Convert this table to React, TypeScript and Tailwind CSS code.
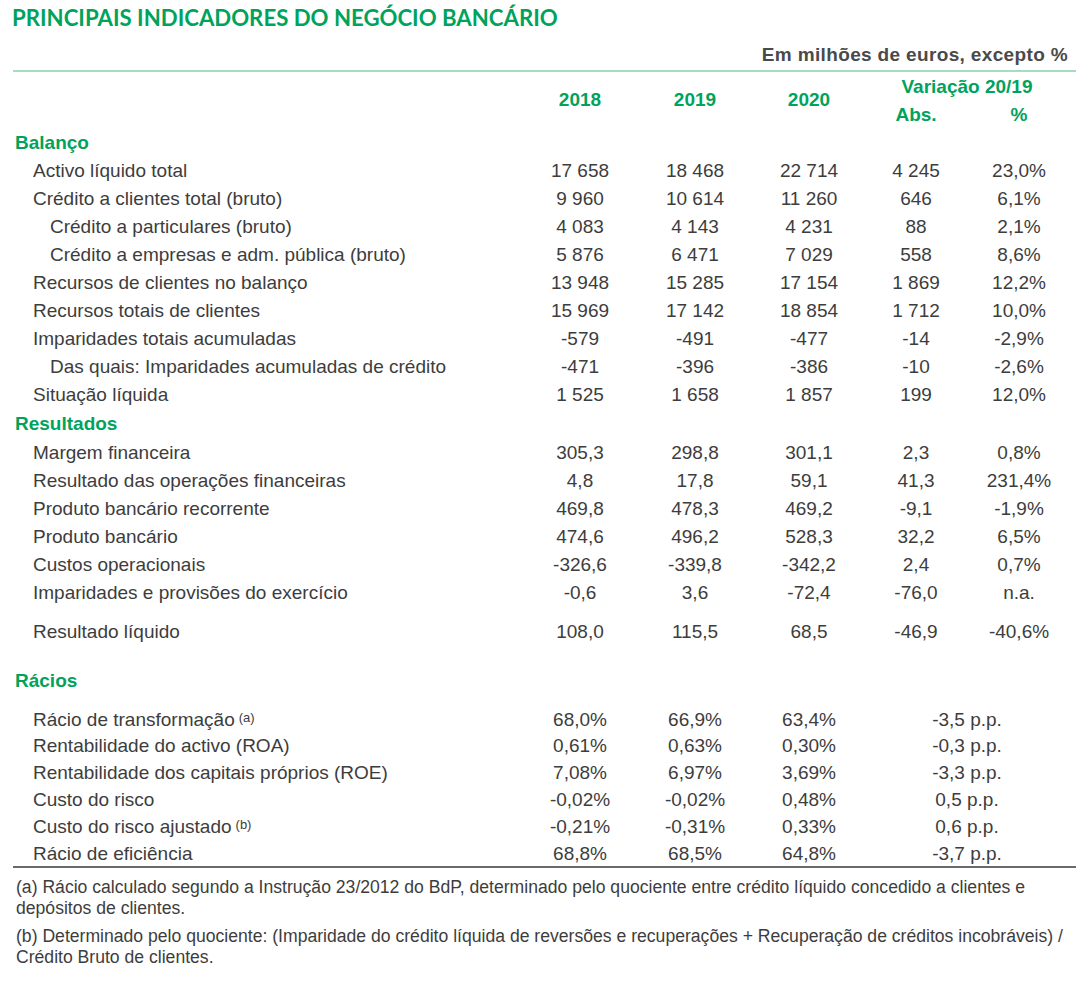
import React from 'react'

type Row = {
  label: string
  level?: 1 | 2
  note?: string
  v: string[]
}

const balanco: Row[] = [
  { label: 'Activo líquido total', v: ['17 658', '18 468', '22 714', '4 245', '23,0%'] },
  { label: 'Crédito a clientes total (bruto)', v: ['9 960', '10 614', '11 260', '646', '6,1%'] },
  { label: 'Crédito a particulares (bruto)', level: 2, v: ['4 083', '4 143', '4 231', '88', '2,1%'] },
  { label: 'Crédito a empresas e adm. pública (bruto)', level: 2, v: ['5 876', '6 471', '7 029', '558', '8,6%'] },
  { label: 'Recursos de clientes no balanço', v: ['13 948', '15 285', '17 154', '1 869', '12,2%'] },
  { label: 'Recursos totais de clientes', v: ['15 969', '17 142', '18 854', '1 712', '10,0%'] },
  { label: 'Imparidades totais acumuladas', v: ['-579', '-491', '-477', '-14', '-2,9%'] },
  { label: 'Das quais: Imparidades acumuladas de crédito', level: 2, v: ['-471', '-396', '-386', '-10', '-2,6%'] },
  { label: 'Situação líquida', v: ['1 525', '1 658', '1 857', '199', '12,0%'] },
]

const resultados: Row[] = [
  { label: 'Margem financeira', v: ['305,3', '298,8', '301,1', '2,3', '0,8%'] },
  { label: 'Resultado das operações financeiras', v: ['4,8', '17,8', '59,1', '41,3', '231,4%'] },
  { label: 'Produto bancário recorrente', v: ['469,8', '478,3', '469,2', '-9,1', '-1,9%'] },
  { label: 'Produto bancário', v: ['474,6', '496,2', '528,3', '32,2', '6,5%'] },
  { label: 'Custos operacionais', v: ['-326,6', '-339,8', '-342,2', '2,4', '0,7%'] },
  { label: 'Imparidades e provisões do exercício', v: ['-0,6', '3,6', '-72,4', '-76,0', 'n.a.'] },
]

const liquido: Row = { label: 'Resultado líquido', v: ['108,0', '115,5', '68,5', '-46,9', '-40,6%'] }

const racios: Row[] = [
  { label: 'Rácio de transformação', note: '(a)', v: ['68,0%', '66,9%', '63,4%', '-3,5 p.p.'] },
  { label: 'Rentabilidade do activo (ROA)', v: ['0,61%', '0,63%', '0,30%', '-0,3 p.p.'] },
  { label: 'Rentabilidade dos capitais próprios (ROE)', v: ['7,08%', '6,97%', '3,69%', '-3,3 p.p.'] },
  { label: 'Custo do risco', v: ['-0,02%', '-0,02%', '0,48%', '0,5 p.p.'] },
  { label: 'Custo do risco ajustado', note: '(b)', v: ['-0,21%', '-0,31%', '0,33%', '0,6 p.p.'] },
  { label: 'Rácio de eficiência', v: ['68,8%', '68,5%', '64,8%', '-3,7 p.p.'] },
]

const cols = 'grid grid-cols-[511px_112px_118px_110px_104px_102px_6px]'

function DataRow({ row, h }: { row: Row; h: string }) {
  const pad = row.level === 2 ? 'pl-[37px]' : 'pl-[20px]'
  return (
    <div className={`${cols} ${h} items-center`}>
      <div className={`${pad} whitespace-nowrap`}>
        {row.label}
        {row.note && <sup className="ml-[4px] text-[13px] relative -top-[4px]">{row.note}</sup>}
      </div>
      {row.v.map((x, i) => (
        <div
          key={i}
          className={`text-center ${row.v.length === 4 && i === 3 ? 'col-span-2' : ''}`}
        >
          {x}
        </div>
      ))}
    </div>
  )
}

function Section({ title, h }: { title: string; h: string }) {
  return (
    <div className={`${h} flex items-center pl-[2px] font-bold text-[#00a35c]`}>{title}</div>
  )
}

export default function App() {
  return (
    <div className="w-[1091px] h-[986px] bg-white text-[19px] text-[#3d3d3d] font-['Liberation_Sans',Arial,sans-serif]">
      <div className="pl-[13px] w-[1076px]">
        <div className="h-[36px] flex items-center">
          <h1 className="font-['Lato',sans-serif] font-bold text-[22.2px] text-[#00a35c] -ml-[1px]">
            PRINCIPAIS INDICADORES DO NEGÓCIO BANCÁRIO
          </h1>
        </div>
        <div className="h-[34px] pt-[4px] flex items-center justify-end pr-[8px] font-bold text-[#4a4a4a] tracking-[0.35px]">
          Em milhões de euros, excepto %
        </div>
        <div className="h-[2px] bg-[#a6dcc2]" />

        {/* cabeçalho */}
        <div className={`${cols} grid-rows-[30px_26px] font-bold text-[#00a35c] mb-[2px]`}>
          <div className="row-span-2" />
          <div className="row-span-2 flex items-center justify-center">2018</div>
          <div className="row-span-2 flex items-center justify-center">2019</div>
          <div className="row-span-2 flex items-center justify-center">2020</div>
          <div className="col-span-2 flex items-center justify-center">Variação 20/19</div>
          <div className="row-span-2" />
          <div className="flex items-center justify-center">Abs.</div>
          <div className="flex items-center justify-center">%</div>
        </div>

        <Section title="Balanço" h="h-[27px]" />
        {balanco.map((r) => (
          <DataRow key={r.label} row={r} h="h-[28px]" />
        ))}

        <Section title="Resultados" h="h-[30px]" />
        {resultados.map((r) => (
          <DataRow key={r.label} row={r} h="h-[28px]" />
        ))}
        <div className="h-[11px]" />
        <DataRow row={liquido} h="h-[28px]" />

        <div className="h-[21px]" />
        <Section title="Rácios" h="h-[28px]" />
        <div className="h-[10.6px]" />
        {racios.map((r) => (
          <DataRow key={r.label} row={r} h="h-[26.8px]" />
        ))}
        <div className="h-[2px] bg-[#6a6a6a]" />

        <div className="mt-[9px] text-[17.6px] leading-[21px] pl-[3px] w-[1060px]">
          <p>
            (a) Rácio calculado segundo a Instrução 23/2012 do BdP, determinado pelo quociente entre crédito líquido
            concedido a clientes e depósitos de clientes.
          </p>
          <p className="mt-[7px]">
            (b) Determinado pelo quociente: (Imparidade do crédito líquida de reversões e recuperações + Recuperação de
            créditos incobráveis) / Crédito Bruto de clientes.
          </p>
        </div>
      </div>
    </div>
  )
}
